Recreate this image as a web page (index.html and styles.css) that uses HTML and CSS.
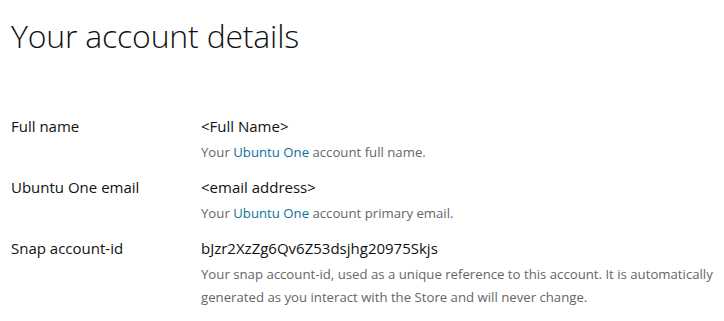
FILE: index.html
```html
<!DOCTYPE html>
<html lang="en">
<head>
<meta charset="utf-8">
<title>Your account details</title>
<link rel="stylesheet" href="styles.css">
</head>
<body>
<main class="page">
  <h1 class="title">Your account details</h1>
  <dl class="details">
    <div class="row">
      <dt class="label">Full name</dt>
      <dd class="field">
        <div class="value">&lt;Full Name&gt;</div>
        <p class="help">Your <a class="link" href="#">Ubuntu One</a> account full name.</p>
      </dd>
    </div>
    <div class="row">
      <dt class="label">Ubuntu One email</dt>
      <dd class="field">
        <div class="value">&lt;email address&gt;</div>
        <p class="help">Your <a class="link" href="#">Ubuntu One</a> account primary email.</p>
      </dd>
    </div>
    <div class="row">
      <dt class="label">Snap account-id</dt>
      <dd class="field">
        <div class="value">bJzr2XzZg6Qv6Z53dsjhg20975Skjs</div>
        <p class="help">Your snap account-id, used as a unique reference to this account. It is automatically generated as you interact with the Store and will never change.</p>
      </dd>
    </div>
  </dl>
</main>
</body>
</html>
```

FILE: styles.css
```css
html, body {
  margin: 0;
  padding: 0;
  background: #ffffff;
}

body {
  font-family: "Open Sans", "Noto Sans", sans-serif;
  color: #111111;
}

.page {
  padding: 16px 0 0 11px;
}

.title {
  margin: 0;
  font-size: 32px;
  line-height: 40px;
  font-weight: 300;
  color: #111111;
  letter-spacing: -0.2px;
}

.details {
  margin: 57px 0 0 0;
  padding: 0;
}

.row {
  display: grid;
  grid-template-columns: 190px 1fr;
  padding-bottom: 10px;
}

.label {
  margin: 0;
  font-size: 15px;
  line-height: 26px;
  font-weight: 400;
}

.field {
  margin: 0;
}

.value {
  font-size: 15px;
  line-height: 26px;
  font-weight: 400;
}

.help {
  margin: 2px 0 0 0;
  font-size: 13.2px;
  line-height: 23px;
  color: #666666;
  font-weight: 400;
}

.link {
  color: #0e6f9c;
  text-decoration: none;
}
```
